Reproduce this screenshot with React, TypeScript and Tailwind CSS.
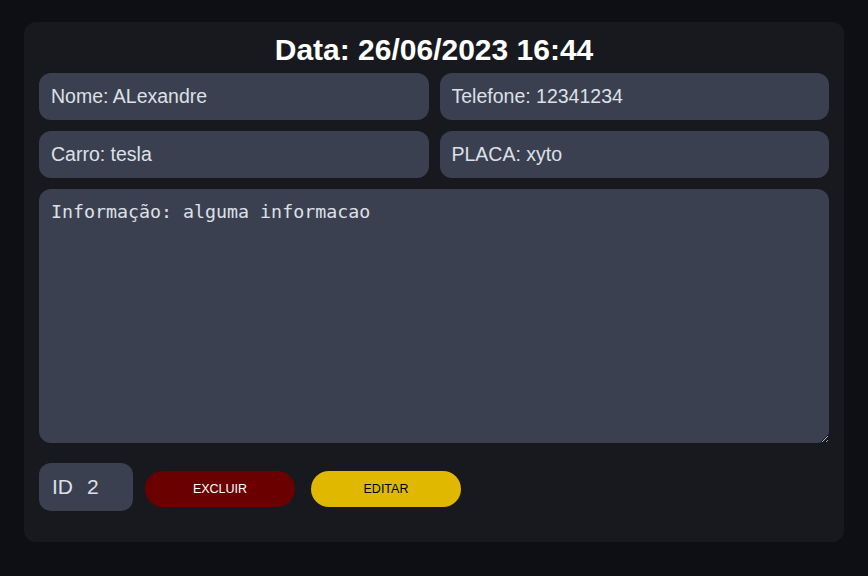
export default function App() {
  const field =
    'h-[47px] w-full rounded-[12px] bg-[#3b4050] px-3 text-[19.5px] text-[#dde0e7] outline-none'

  return (
    <div className="min-h-[576px] bg-[#0e0f14] px-6 pt-[22px]" style={{ fontFamily: '"Liberation Sans", Arial, sans-serif' }}>
      <div className="rounded-[12px] bg-[#18191e] px-[15px] pb-[31px] pt-[8px]">
        <h1 className="text-center text-[30px] font-bold leading-[40px] text-white">Data: 26/06/2023 16:44</h1>

        <div className="mt-[3px] grid grid-cols-2 gap-x-[11px] gap-y-[11px]">
          <input className={field} readOnly defaultValue="Nome: ALexandre" />
          <input className={field} readOnly defaultValue="Telefone: 12341234" />
          <input className={field} readOnly defaultValue="Carro: tesla" />
          <input className={field} readOnly defaultValue="PLACA: xyto" />
        </div>

        <textarea
          className="mt-[11px] block h-[254px] w-full rounded-[12px] bg-[#3b4050] px-3 py-[11px] text-[18.3px] leading-[24px] text-[#dde0e7] outline-none"
          style={{ fontFamily: '"DejaVu Sans Mono", monospace' }}
          readOnly
          defaultValue="Informação: alguma informacao"
        />

        <div className="mt-[20px] flex items-start">
          <div className="flex h-[48px] w-[94px] items-center gap-[14px] rounded-[12px] bg-[#3b4050] px-[13px] text-[21px] text-[#dde0e7]">
            <span>ID</span>
            <span>2</span>
          </div>
          <button className="ml-3 mt-[8px] h-[36px] w-[150px] rounded-full bg-[#6b0000] text-[12.5px] text-white">EXCLUIR</button>
          <button className="ml-4 mt-[8px] h-[36px] w-[150px] rounded-full bg-[#e0b800] text-[12.5px] text-black">EDITAR</button>
        </div>
      </div>
    </div>
  )
}
